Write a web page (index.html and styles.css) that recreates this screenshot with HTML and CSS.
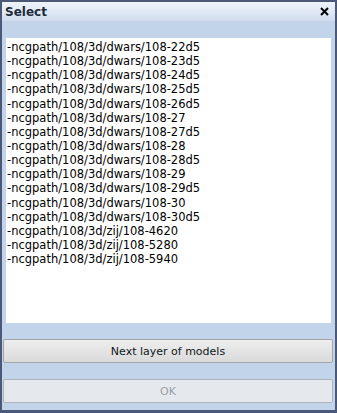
FILE: index.html
```html
<!DOCTYPE html>
<html>
<head>
<meta charset="utf-8">
<link rel="stylesheet" href="styles.css">
</head>
<body>
<div class="window">
  <div class="titlebar">
    <span class="title">Select</span>
    <svg class="close" width="9" height="9" viewBox="0 0 9 9"><path d="M1 1 L8 8 M8 1 L1 8" stroke="#000" stroke-width="2"/></svg>
  </div>
  <div class="body">
    <div class="list">
      <div class="item">-ncgpath/108/3d/dwars/108-22d5</div>
      <div class="item">-ncgpath/108/3d/dwars/108-23d5</div>
      <div class="item">-ncgpath/108/3d/dwars/108-24d5</div>
      <div class="item">-ncgpath/108/3d/dwars/108-25d5</div>
      <div class="item">-ncgpath/108/3d/dwars/108-26d5</div>
      <div class="item">-ncgpath/108/3d/dwars/108-27</div>
      <div class="item">-ncgpath/108/3d/dwars/108-27d5</div>
      <div class="item">-ncgpath/108/3d/dwars/108-28</div>
      <div class="item">-ncgpath/108/3d/dwars/108-28d5</div>
      <div class="item">-ncgpath/108/3d/dwars/108-29</div>
      <div class="item">-ncgpath/108/3d/dwars/108-29d5</div>
      <div class="item">-ncgpath/108/3d/dwars/108-30</div>
      <div class="item">-ncgpath/108/3d/dwars/108-30d5</div>
      <div class="item">-ncgpath/108/3d/zij/108-4620</div>
      <div class="item">-ncgpath/108/3d/zij/108-5280</div>
      <div class="item">-ncgpath/108/3d/zij/108-5940</div>
    </div>
    <button class="btn next">Next layer of models</button>
    <button class="btn ok" disabled>OK</button>
  </div>
</div>
</body>
</html>
```
FILE: styles.css
```css
html, body {
  margin: 0;
  padding: 0;
}
body {
  width: 337px;
  height: 413px;
  overflow: hidden;
  font-family: "DejaVu Sans", Tahoma, sans-serif;
  font-size: 11px;
}
.window {
  box-sizing: border-box;
  width: 337px;
  height: 413px;
  border: 2px solid #4b5877;
  border-bottom-width: 3px;
  background: #c2d4ea;
  display: flex;
  flex-direction: column;
}
.titlebar {
  height: 19px;
  display: flex;
  align-items: center;
  justify-content: space-between;
  padding: 0 5px 0 3px;
  background: linear-gradient(#f0f4fa, #dde7f3 60%, #cfdcee);
}
.title {
  font-weight: bold;
  font-size: 12px;
  color: #1e2a3a;
}
.close {
  margin-right: 1px;
}
.body {
  flex: 1;
  display: flex;
  flex-direction: column;
  padding: 17px 1px 0 1px;
}
.list {
  margin: 0 3px;
  height: 285px;
  background: #fff;
  box-sizing: border-box;
  padding: 2px 1px;
  color: #000;
  font-size: 11.5px;
}
.item {
  height: 14.15px;
  line-height: 14px;
  white-space: nowrap;
}
.btn {
  display: block;
  box-sizing: border-box;
  width: 330px;
  height: 24px;
  margin: 16px 0 0 0;
  font-family: "DejaVu Sans", Tahoma, sans-serif;
  font-size: 11px;
  border-radius: 2px;
  padding: 0;
}
.next {
  background: linear-gradient(#eeeeee, #dadada);
  border: 1px solid #a4a4a4;
  color: #101820;
}
.ok {
  background: #e5e9ee;
  border: 1px solid #aeb3b9;
  color: #9a9ea4;
}
```
